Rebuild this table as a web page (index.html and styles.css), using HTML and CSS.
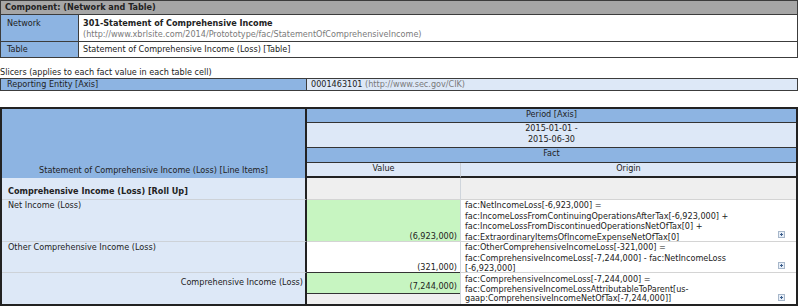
FILE: index.html
```html
<!DOCTYPE html>
<html lang="en">
<head>
  <meta charset="UTF-8">
  <title>Statement of Comprehensive Income</title>
  <link rel="stylesheet" href="styles.css">
</head>
<body>
<div class="component">
  <div class="component-title">Component: (Network and Table)</div>
  <div class="label network-label">Network</div>
  <div class="info network-info">
    <div class="network-name">301-Statement of Comprehensive Income</div>
    <div class="uri">(http://www.xbrlsite.com/2014/Protototype/fac/StatementOfComprehensiveIncome)</div>
  </div>
  <div class="label table-label">Table</div>
  <div class="info table-info">Statement of Comprehensive Income (Loss) [Table]</div>
</div>

<div class="slicers-title">Slicers (applies to each fact value in each table cell)</div>
<div class="slicers">
  <div class="slicer-axis">Reporting Entity [Axis]</div>
  <div class="slicer-member">0001463101 <span class="uri">(http://www.sec.gov/CIK)</span></div>
</div>

<div class="facts">
  <div class="line-items">Statement of Comprehensive Income (Loss) [Line Items]</div>
  <div class="axis wide">Period [Axis]</div>
  <div class="member wide dates"><div>2015-01-01 -<br>2015-06-30</div></div>
  <div class="axis wide">Fact</div>
  <div class="member col-head">Value</div>
  <div class="member col-head origin-head">Origin</div>

  <div class="item rollup">Comprehensive Income (Loss) [Roll Up]</div>
  <div class="blank"></div>
  <div class="blank origin"></div>

  <div class="item">Net Income (Loss)</div>
  <div class="amount calc">(6,923,000)</div>
  <div class="origin">
    <span>fac:NetIncomeLoss[-6,923,000] =<br>fac:IncomeLossFromContinuingOperationsAfterTax[-6,923,000] +<br>fac:IncomeLossFromDiscontinuedOperationsNetOfTax[0] +<br>fac:ExtraordinaryItemsOfIncomeExpenseNetOfTax[0]</span>
    <span class="expand"></span>
  </div>

  <div class="item">Other Comprehensive Income (Loss)</div>
  <div class="amount before-total">(321,000)</div>
  <div class="origin">
    <span>fac:OtherComprehensiveIncomeLoss[-321,000] =<br>fac:ComprehensiveIncomeLoss[-7,244,000] - fac:NetIncomeLoss<br>[-6,923,000]</span>
    <span class="expand"></span>
  </div>

  <div class="item total-label">Comprehensive Income (Loss)</div>
  <div class="total-cell"><div class="amount-total">(7,244,000)</div></div>
  <div class="origin last">
    <span>fac:ComprehensiveIncomeLoss[-7,244,000] =<br>fac:ComprehensiveIncomeLossAttributableToParent[us-<br>gaap:ComprehensiveIncomeNetOfTax[-7,244,000]]</span>
    <span class="expand"></span>
  </div>
</div>
</body>
</html>
```

FILE: styles.css
```css
* {
  box-sizing: border-box;
}

body {
  margin: 0;
  padding: 0;
  width: 798px;
  font-family: "DejaVu Sans Condensed", "DejaVu Sans", sans-serif;
  font-size: 9px;
  line-height: 11px;
  color: #222;
  background: #fff;
}

.uri {
  color: #7a7a7a;
}

/* component block */

.component {
  display: grid;
  grid-template-columns: 78px 1fr;
  grid-template-rows: 14px 27px 15px;
  border: 1px solid #3c3c3c;
}

.component-title {
  grid-column: 1 / 3;
  background-color: #a6a6a6;
  font-weight: bold;
  padding: 1px 4px 0;
  border-bottom: 1px solid #3c3c3c;
}

.label {
  background-color: #8db4e2;
  border-right: 1px solid #3c3c3c;
  padding: 2px 6px 0;
}

.info {
  padding: 2px 4px 0;
}

.network-label,
.network-info {
  border-bottom: 1px solid #3c3c3c;
  padding-top: 3px;
}

.network-name {
  font-weight: bold;
}

/* slicers */

.slicers-title {
  margin-top: 9px;
  height: 11px;
}

.slicers {
  display: grid;
  grid-template-columns: 306px 1fr;
  height: 13px;
  border: 1px solid #3c3c3c;
}

.slicer-axis {
  background-color: #8db4e2;
  border-right: 1px solid #3c3c3c;
  padding: 0 6px;
}

.slicer-member {
  background-color: #dde8f7;
  padding: 0 4px;
}

/* fact table */

.facts {
  display: grid;
  grid-template-columns: 305px 153px 336px;
  grid-template-rows: 14px 25px 15px 15px 22px 42px 31px 31px;
  margin-top: 16px;
  border: 2px solid #222;
}

.line-items {
  grid-row: 1 / 5;
  display: flex;
  align-items: flex-end;
  justify-content: center;
  padding-bottom: 2px;
  background-color: #8db4e2;
  border-right: 2px solid #222;
}

.wide {
  grid-column: 2 / 4;
}

.axis {
  background-color: #8db4e2;
  text-align: center;
  border-bottom: 1px solid #333;
}

.member {
  background-color: #dde8f7;
  text-align: center;
  border-bottom: 1px solid #333;
}

.dates {
  display: flex;
  justify-content: center;
}

.col-head {
  border-bottom: 2px solid #222;
}

.origin-head {
  border-left: 1px solid #c8ced6;
}

.item {
  background-color: #dde8f7;
  border-right: 2px solid #222;
  border-bottom: 1px solid #cdd2d8;
  padding: 0 6px;
}

.rollup {
  font-weight: bold;
  padding-top: 8px;
}

.blank {
  background-color: #efefef;
  border-bottom: 1px solid #d4d4d4;
}

.origin {
  display: flex;
  justify-content: space-between;
  align-items: flex-start;
  line-height: 10.7px;
  border-left: 1px solid #cfd5dc;
  border-bottom: 1px solid #d4d4d4;
  padding: 0 0 0 4px;
}

.origin .expand {
  align-self: flex-end;
}

.origin.last {
  border-bottom: none;
  line-height: 9.5px;
  padding-top: 2px;
}

.expand {
  flex: none;
  width: 7px;
  height: 7px;
  margin: 0 11px 3px 0;
  border: 1px solid #a7b7ca;
  background: linear-gradient(#3d5f8c, #3d5f8c) center / 3px 1px no-repeat,
              linear-gradient(#3d5f8c, #3d5f8c) center / 1px 3px no-repeat,
              #e8eff8;
}

.amount {
  display: flex;
  align-items: flex-end;
  justify-content: flex-end;
  line-height: 9px;
  padding: 0 3px 0 0;
  border-bottom: 1px solid #d4d4d4;
}

.calc {
  background-color: #c7f5c1;
}

.before-total {
  border-bottom: 1px solid #333;
}

.total-label {
  border-bottom: none;
  text-align: right;
  padding: 4px 2px 0 0;
}

.total-cell {
  background-color: #efefef;
}

.amount-total {
  height: 21px;
  padding: 8px 3px 0 0;
  text-align: right;
  background-color: #c7f5c1;
  border-bottom: 1px solid #333;
}
```
